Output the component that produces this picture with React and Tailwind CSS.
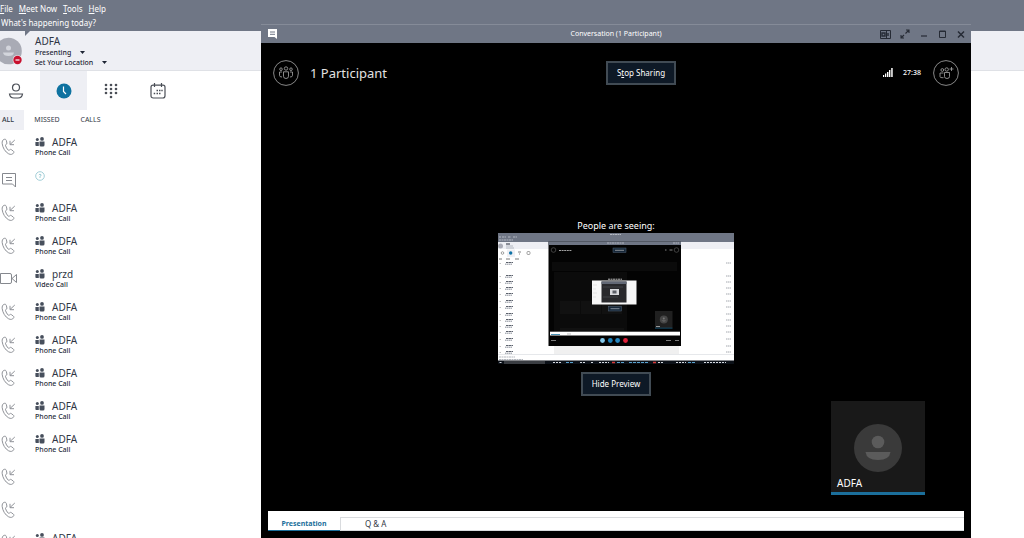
const calls = [
  { type: 'phone', name: 'ADFA', detail: 'Phone Call' },
  { type: 'chat', name: '', detail: '' },
  { type: 'phone', name: 'ADFA', detail: 'Phone Call' },
  { type: 'phone', name: 'ADFA', detail: 'Phone Call' },
  { type: 'video', name: 'przd', detail: 'Video Call' },
  { type: 'phone', name: 'ADFA', detail: 'Phone Call' },
  { type: 'phone', name: 'ADFA', detail: 'Phone Call' },
  { type: 'phone', name: 'ADFA', detail: 'Phone Call' },
  { type: 'phone', name: 'ADFA', detail: 'Phone Call' },
  { type: 'phone', name: 'ADFA', detail: 'Phone Call' },
  { type: 'phone', name: '', detail: '' },
  { type: 'phone', name: '', detail: '' },
  { type: 'phone', name: 'ADFA', detail: 'Phone Call' },
];

const PhoneIcon = () => (
  <svg width="16" height="18" viewBox="0 0 16 18" fill="none" stroke="#8f9298" strokeWidth="1">
    <path d="M4.300 1.300C2.600 1.700 1.900 3.300 2.200 5.700c.5 4 3 8.300 6.400 10.100 2.200 1.100 4 .7 5-.9.500-.8.300-1.300-.3-1.800l-2-1.500c-.6-.4-1.200-.3-1.700.3-.5.600-1 .6-1.500.1C6.900 10.800 6 9.200 5.500 7.600c-.2-.6 0-1 .6-1.200.7-.2 1-.7.8-1.400L6.300 2.400C6 1.500 5.400 1.100 4.300 1.300z" />
    <path d="M14.800 2L10 6.500M10 2.800v3.900h4" />
  </svg>
);

const ChatIcon = () => (
  <svg width="16" height="18" viewBox="0 0 16 18" fill="none" stroke="#85888e" strokeWidth="1">
    <path d="M2.500 2.500h13v13.500l-3-3h-10zM6 6.500h6M6 9.500h6" />
  </svg>
);

const VideoIcon = () => (
  <svg width="18" height="18" viewBox="0 0 18 18" fill="none" stroke="#85888e" strokeWidth="1">
    <path d="M.5 3.500h9.500q1.500 0 1.500 1.500v7q0 1.500-1.500 1.500H.5zM12 8.500l4.500-4v8z" />
  </svg>
);

const CallIcon = ({ type }) => {
  if (type === 'chat') return <ChatIcon />;
  if (type === 'video') return <VideoIcon />;
  return <PhoneIcon />;
};

const GroupIcon = () => (
  <svg width="10" height="10" viewBox="0 0 10 10" fill="#474f5c">
    <circle cx="2.300" cy="2.600" r="1.500" />
    <circle cx="7" cy="1.900" r="1.900" />
    <path d="M.4 5h3.400v4H1.200Q.4 9 .4 8zM4.500 4.500h5V8q0 1.500-1.500 1.500H6Q4.500 9.500 4.500 8z" />
  </svg>
);

const Caret = () => (
  <svg width="5" height="3" viewBox="0 0 5 3" fill="#1d2433">
    <path d="M0 0h5L2.500 3z" />
  </svg>
);

const ParticipantsIcon = ({ add }) => (
  <svg className="block" width="26" height="26" viewBox="0 0 26 26" fill="none" stroke="#aaa" strokeWidth="0.8">
    <circle cx="13" cy="13" r="12.400" />
    {add ? (
      <>
        <circle cx="9.300" cy="10" r="1.400" />
        <circle cx="13.700" cy="9.500" r="1.700" />
        <path d="M10.500 13H7v3.500q0 1.200 2 1.200h1.500M11.500 12.500h5v4q0 2-2.500 2t-2.500-2zM18.500 7v4M16.500 9h4" />
      </>
    ) : (
      <>
        <circle cx="13" cy="8.500" r="1.700" />
        <circle cx="8" cy="9.200" r="1.300" />
        <circle cx="18" cy="9.200" r="1.300" />
        <path d="M10.500 11.800h5v4.500q0 2.200-2.500 2.200t-2.500-2.200zM9 12H6.500v3.500q0 1.500 2.500 1.500M17 12h2.500v3.500q0 1.500-2.500 1.500" />
      </>
    )}
  </svg>
);

const previewRows = [28, 41, 47, 53, 59, 66, 72, 79, 85, 91, 97, 104, 111, 117];

/* Live thumbnail of the shared desktop */
const DesktopPreview = () => (
  <svg className="block w-59" viewBox="0 0 236 131" role="img" aria-label="Shared desktop preview">
    <rect width="236" height="131" fill="#fff" />
    <rect width="236" height="9" fill="#6f7685" />
    <path d="M1 4h2m1 0h4m2 0h3m2 0h4M1 7h14M112 1.500h11" stroke="#c5c9d1" strokeWidth="0.800" strokeDasharray="2 0.500" />
    <rect y="9" width="236" height="7" fill="#eeeff4" />
    <circle cx="2.500" cy="13" r="2.500" fill="#a9abb5" />
    <path d="M8 11h4" stroke="#222936" strokeWidth="1" />
    <path d="M8 13h7M8 15h8" stroke="#8a90a0" strokeWidth="0.600" />
    <rect x="9" y="16.500" width="8" height="7.500" fill="#eeeff4" />
    <circle cx="4.500" cy="20" r="1.300" fill="none" stroke="#666" strokeWidth="0.600" />
    <circle cx="12.700" cy="20" r="1.700" fill="#0e72a6" />
    <path d="M20 19h3M21 21h1" stroke="#666" strokeWidth="0.800" />
    <rect x="29" y="18.500" width="3" height="3" rx="1" fill="none" stroke="#666" strokeWidth="0.600" />
    <path d="M1 26h3M8 26h4M17 26h4" stroke="#555" strokeWidth="0.800" />
    {previewRows.map((y) => (
      <g key={y} strokeWidth="0.900">
        <path d={`M8 ${y + 1.5}h7`} stroke="#4a505c" strokeDasharray="2 0.400 3 0.300" />
        <path d={`M7 ${y + 3.2}h7`} stroke="#7d838e" strokeDasharray="1.500 0.400" />
        <path d={`M1.500 ${y + 2.5}h1.500`} stroke="#bbb" />
        <path d={`M228 ${y + 2}h5`} stroke="#9a9ea6" strokeDasharray="1.500 0.500" />
      </g>
    ))}
    <rect x="56" y="113" width="125" height="8" fill="#f0f0f0" />
    <path d="M0 121.500h236" stroke="#d5d8de" strokeWidth="0.600" />
    <path d="M1 124h16M1 126.500h24" stroke="#9298a2" strokeWidth="0.700" strokeDasharray="2 0.500" />
    {/* conversation window */}
    <rect x="50.500" y="8.500" width="132.500" height="104.500" fill="#030303" />
    <rect x="50.500" y="8.500" width="132.500" height="3.500" fill="#6f7685" />
    <path d="M109 10h17M175 10h6" stroke="#ccd0d8" strokeWidth="0.700" strokeDasharray="2 0.500" />
    <rect x="54" y="29" width="125" height="9" fill="#0b0b0b" />
    <rect x="56" y="39" width="73" height="60" fill="#0b0b0b" />
    <path d="M62 68h20v13H62zM83 68h20v13H83zM104 68h20v13h-20zM62 95h64v3H62z" fill="#111" />
    <circle cx="55.500" cy="17" r="2.300" fill="none" stroke="#777" strokeWidth="0.500" />
    <path d="M61 17.500h13" stroke="#b5b5b5" strokeWidth="0.900" strokeDasharray="2 0.600" />
    <rect x="115" y="15" width="13" height="4.500" fill="#17283a" stroke="#526377" strokeWidth="0.500" />
    <path d="M117 17.300h9M167 17h1.500M171.500 17h3" stroke="#bbb" strokeWidth="0.700" />
    <circle cx="178.500" cy="17" r="2.300" fill="none" stroke="#777" strokeWidth="0.500" />
    <path d="M110 46.200h14" stroke="#ccc" strokeWidth="0.900" strokeDasharray="2 0.500" />
    <rect x="94" y="47.500" width="44.500" height="24" fill="#f7f7f7" />
    <path d="M95 52h4M95 56h3M95 60h4M95 64h3" stroke="#ccc" strokeWidth="0.500" />
    <rect x="103.500" y="48.500" width="25" height="21" fill="#29292c" />
    <rect x="103.500" y="48.500" width="25" height="2.500" fill="#626875" />
    <rect x="112" y="56" width="9" height="6" fill="#d8d9dc" />
    <rect x="114.500" y="57.500" width="4" height="3" fill="#5c5f66" />
    <path d="M105 54h20M105 64h15" stroke="#4c4d52" strokeWidth="0.700" />
    <rect x="110.500" y="73.500" width="13" height="4.500" fill="#17283a" stroke="#526377" strokeWidth="0.500" />
    <path d="M112.500 75.700h9" stroke="#aeb5bf" strokeWidth="0.700" />
    <rect x="157" y="78" width="17.500" height="17" fill="#202020" />
    <circle cx="165.800" cy="86.500" r="4" fill="#464646" />
    <circle cx="165.800" cy="85.500" r="1" fill="#777" />
    <path d="M163.500 87.500h4.500q-2 2-4.500 0z" fill="#777" />
    <path d="M158 93.500h4" stroke="#ccc" strokeWidth="0.700" />
    <path d="M157 95.200h17.500" stroke="#1b76a3" strokeWidth="0.600" />
    <rect x="52" y="98.700" width="130" height="3.800" fill="#fff" />
    <path d="M53 101.500h9" stroke="#1b76a3" strokeWidth="0.800" />
    <path d="M69 101h4" stroke="#999" strokeWidth="0.600" />
    <circle cx="104.500" cy="107.500" r="2.400" fill="#83c8ea" />
    <circle cx="112.300" cy="107.500" r="2.400" fill="#1c7fb8" />
    <circle cx="119.600" cy="107.500" r="2.400" fill="#2586c0" />
    <circle cx="127.500" cy="107.500" r="2.400" fill="#e0203a" />
    <path d="M53 107.500h5M168 107.500h5M177 107.500h4" stroke="#888" strokeWidth="0.900" />
    {/* taskbar */}
    <rect y="127.500" width="236" height="3.500" fill="#0c1118" />
    <rect x="6" y="128" width="41" height="3" fill="#3a3d42" />
    <path d="M1.500 129.500h2M55 129.500h8M82 129.500h5M93 129.500h2M101 129.500h10M160 129.500h6M178 129.500h10M206 129.500h22" stroke="#d6dae0" strokeWidth="1" strokeDasharray="2 1" />
    <path d="M68 129.500h8M119 129.500h7M131 129.500h20M190 129.500h8" stroke="#5ba3cf" strokeWidth="1" strokeDasharray="3 1" />
    <path d="M114 129.500h3M155 129.500h3" stroke="#d83b3b" strokeWidth="1.400" />
  </svg>
);

const CallRow = ({ call }) => (
  <li className="flex h-[33px] items-center">
    <span className="w-[35px] shrink-0"><CallIcon type={call.type} /></span>
    {call.name ? (
      <div>
        <p className="flex items-center gap-[7px] text-[10px] leading-[12px] text-[#303644]">
          <GroupIcon />
          {call.name}
        </p>
        <p className="text-[7px] leading-[9px] font-medium text-[#252b38]">{call.detail}</p>
      </div>
    ) : call.type === 'chat' ? (
      <svg className="mb-2" width="10" height="10" viewBox="0 0 10 10" fill="none" stroke="#a3cfd8" strokeWidth="1">
        <circle cx="5" cy="5" r="4.300" />
        <path d="M3.800 3.900q1.200-1.500 2.400 0Q6 5 5 5.200V7" />
      </svg>
    ) : null}
  </li>
);

const SkypeMain = () => (
  <div className="flex h-full flex-col">
    <header className="h-[31px] shrink-0 bg-[#6f7685] text-white">
      <nav className="flex h-[17px] items-center gap-[6px] text-[8px] leading-[12px]">
        <button><u>F</u>ile</button>
        <button><u>M</u>eet Now</button>
        <button><u>T</u>ools</button>
        <button><u>H</u>elp</button>
      </nav>
      <input
        aria-label="Status note"
        className="block h-3 w-[200px] pl-px text-[8px] leading-[12px] text-white outline-none placeholder:text-white placeholder:opacity-100"
        placeholder="What's happening today?"
      />
    </header>

    <section className="relative flex h-10 shrink-0 items-center border-b border-[#dfe1e6] bg-[#eeeff4]">
      <svg className="absolute top-0 left-[25px]" width="5" height="5" viewBox="0 0 5 5" fill="#6f7685">
        <path d="M0 0h5L0 5z" />
      </svg>
      <svg className="w-[35px] shrink-0" height="30" viewBox="0 0 35 30">
        <circle cx="8.500" cy="15" r="13.300" fill="#a9abb5" />
        <circle cx="8.500" cy="12" r="2.500" fill="#d3d5dc" />
        <path d="M3 16.500h11q-.5 3.500-5.500 3.500T3 16.500z" fill="#d3d5dc" />
        <circle cx="17.500" cy="24" r="4.800" fill="#eeeff4" />
        <circle cx="17.500" cy="24" r="4.200" fill="#c8102e" />
        <path d="M15.500 24h4" stroke="#fff" strokeWidth="1.200" />
      </svg>
      <div className="text-[7px] leading-[10px] font-medium text-[#1d2433]">
        <p className="text-[10px] leading-[14px] font-normal text-[#303644]">ADFA</p>
        <button className="flex items-center gap-[9px]">Presenting <Caret /></button>
        <button className="flex items-center gap-[9px]">Set Your Location <Caret /></button>
      </div>
    </section>

    <nav className="-ml-2 flex h-[39px] shrink-0">
      <button aria-label="Contacts" className="flex w-12 items-center justify-center">
        <svg width="16" height="16" viewBox="0 0 16 16" fill="none" stroke="#4b4f57" strokeWidth="1.2">
          <circle cx="8" cy="4.500" r="3.500" />
          <path d="M1.500 11h13q-.5 4-4.500 4H6q-4 0-4.500-4z" />
        </svg>
      </button>
      <button aria-label="History" className="flex w-[47px] items-center justify-center bg-[#eeeff4]">
        <svg width="16" height="16" viewBox="0 0 16 16" fill="none">
          <circle cx="8" cy="8" r="7.500" fill="#0e72a0" />
          <path d="M7.500 3.500v5l2.500 2.500" stroke="#fff" strokeWidth="1.200" />
        </svg>
      </button>
      <button aria-label="Dial pad" className="flex w-[47px] items-center justify-center">
        <svg width="14" height="16" viewBox="0 0 14 16" fill="#4b4f57">
          {[2, 6, 10].map((y) => [2, 7, 12].map((x) => <circle key={`${x}-${y}`} cx={x} cy={y} r="1.300" />))}
          <circle cx="7" cy="14" r="1.300" />
        </svg>
      </button>
      <button aria-label="Meetings" className="flex w-12 items-center justify-center">
        <svg width="16" height="16" viewBox="0 0 16 16" fill="none" stroke="#4b4f57" strokeWidth="1.2">
          <path d="M3 2.200h10q2 0 2 2v8.500q0 2.300-2.300 2.300H3.300Q1 15 1 12.700V4.200q0-2 2-2zM4.500 0v4M11.500 0v4" />
          <path d="M6.500 7.500h1.500M9 7.500h1.500M11.300 7.500h1.400M3.700 10.500h1.500M6.500 10.500h1.500M9 10.500h1.500" strokeWidth="1.600" />
        </svg>
      </button>
    </nav>

    <nav className="flex h-5 shrink-0 text-[7px] leading-[10px] text-[#333a47]">
      <button className="w-6 bg-[#eeeff4] pr-2 font-medium">ALL</button>
      <button className="w-[46px]">MISSED</button>
      <button className="w-[41px]">CALLS</button>
    </nav>

    <ul className="min-h-0 flex-1 overflow-hidden">
      {calls.map((call, index) => <CallRow key={index} call={call} />)}
    </ul>
  </div>
);

const TitleBar = () => (
  <header className="flex h-[19px] shrink-0 items-center border-t border-[#858b98] bg-[#6f7685] px-[5px] text-white">
    <div className="flex-1">
      <svg className="ml-px" width="11" height="10" viewBox="0 0 11 10">
        <path d="M1 0h9v10L7.500 8H1z" fill="#fff" />
        <path d="M3 3h5M3 5.300h5" stroke="#6f7685" />
      </svg>
    </div>
    <h1 className="text-[7px] leading-[10px]">Conversation (1 Participant)</h1>
    <div className="flex flex-1 items-center justify-end gap-[9px]">
      <button aria-label="Toggle panel">
        <svg className="block" width="11" height="9" viewBox="0 0 11 9" fill="none" stroke="#262b35">
          <path d="M.5.5h10v8H.5zM6.500.5v8" />
          <path d="M2 3h3v3H2zM8 3v3" strokeWidth="1.400" />
        </svg>
      </button>
      <button aria-label="Full screen">
        <svg className="block" width="10" height="10" viewBox="0 0 10 10" fill="none" stroke="#262b35" strokeWidth="1.100">
          <path d="M5.500 4.500L9 1M6 1h3v3M4 6L1 9M1 6v3h3" />
        </svg>
      </button>
      <button aria-label="Minimize">
        <svg className="block" width="10" height="9" viewBox="0 0 10 9" stroke="#262b35" strokeWidth="1.200"><path d="M2 6h6" /></svg>
      </button>
      <button aria-label="Maximize">
        <svg className="block" width="9" height="8" viewBox="0 0 9 8" fill="none" stroke="#262b35">
          <path d="M1.500 1h6v6.500h-6zM1 1.500h7" />
        </svg>
      </button>
      <button aria-label="Close">
        <svg className="block" width="10" height="9" viewBox="0 0 10 9" stroke="#262b35" strokeWidth="1.500"><path d="M2 1.500l6 6M8 1.500l-6 6" /></svg>
      </button>
    </div>
  </header>
);

const Conversation = () => (
  <main className="absolute top-6 right-[53px] bottom-0 left-[261px] flex flex-col bg-black text-white">
    <TitleBar />

    <div className="flex h-[59px] shrink-0 items-center px-3">
      <div className="flex flex-1 items-center gap-[11px]">
        <button aria-label="Participants"><ParticipantsIcon /></button>
        <h2 className="text-[13px] leading-[18px] text-[#e2e2e2]">1 Participant</h2>
      </div>
      {/* sits right of centre, clear of the participant count */}
      <button className="ml-[50px] h-6 w-[70px] border-2 border-[#414b54] bg-[#0e1926] text-[8px] leading-[12px]">
        S<u>t</u>op Sharing
      </button>
      <div className="flex flex-1 items-center justify-end">
        <svg width="10" height="9" viewBox="0 0 10 9" fill="#fff">
          <path d="M0 7h1.200v2H0zM2 5.500h1.300V9H2zM4 4h1.400v5H4zM6 2h1.400v7H6zM8.200 0h1.500v9H8.200z" />
        </svg>
        <span className="mr-3 ml-[10px] text-[7px] leading-[10px] font-medium">27:38</span>
        <button aria-label="Add participants"><ParticipantsIcon add /></button>
      </div>
    </div>

    <section className="relative flex min-h-0 flex-1 flex-col items-center pt-[117px]">
      <p className="text-[9px] leading-[14px]">People are seeing:</p>
      <DesktopPreview />
      <button className="mt-2 h-6 w-[70px] shrink-0 border-2 border-[#414b54] bg-[#0e1926] text-[8px] leading-[12px]">
        Hide Preview
      </button>
      <figure className="absolute right-[46px] bottom-4 flex h-[94px] w-[94px] flex-col border-b-[3px] border-[#1b6f9b] bg-[#191919]">
        <svg className="mx-auto mt-[22px] shrink-0" width="48" height="50" viewBox="0 0 48 50">
          <circle cx="24" cy="25" r="24" fill="#3a3a3a" />
          <circle cx="24" cy="19" r="6.300" fill="#5b5b5b" />
          <path d="M11.500 29h25q-1 8-12.500 8t-12.500-8z" fill="#5b5b5b" />
        </svg>
        <figcaption className="mt-[3px] pl-[6px] text-[10px] leading-[14px]">ADFA</figcaption>
      </figure>
    </section>

    <nav className="mx-[7px] mb-[7px] flex h-5 shrink-0 items-end bg-white leading-[12px]">
      <button className="h-[14px] w-[72px] border-b border-[#1b6f9b] text-[7px] font-bold text-[#1b6f9b]">Presentation</button>
      <button className="h-[14px] flex-1 border-y border-l border-[#d9dbde] pl-6 text-left text-[8px] text-[#303644]">Q &amp; A</button>
    </nav>
  </main>
);

export default function App() {
  return (
    <div className="relative h-screen overflow-hidden bg-white font-['Noto_Sans','Open_Sans',sans-serif]">
      <SkypeMain />
      <Conversation />
    </div>
  );
}
